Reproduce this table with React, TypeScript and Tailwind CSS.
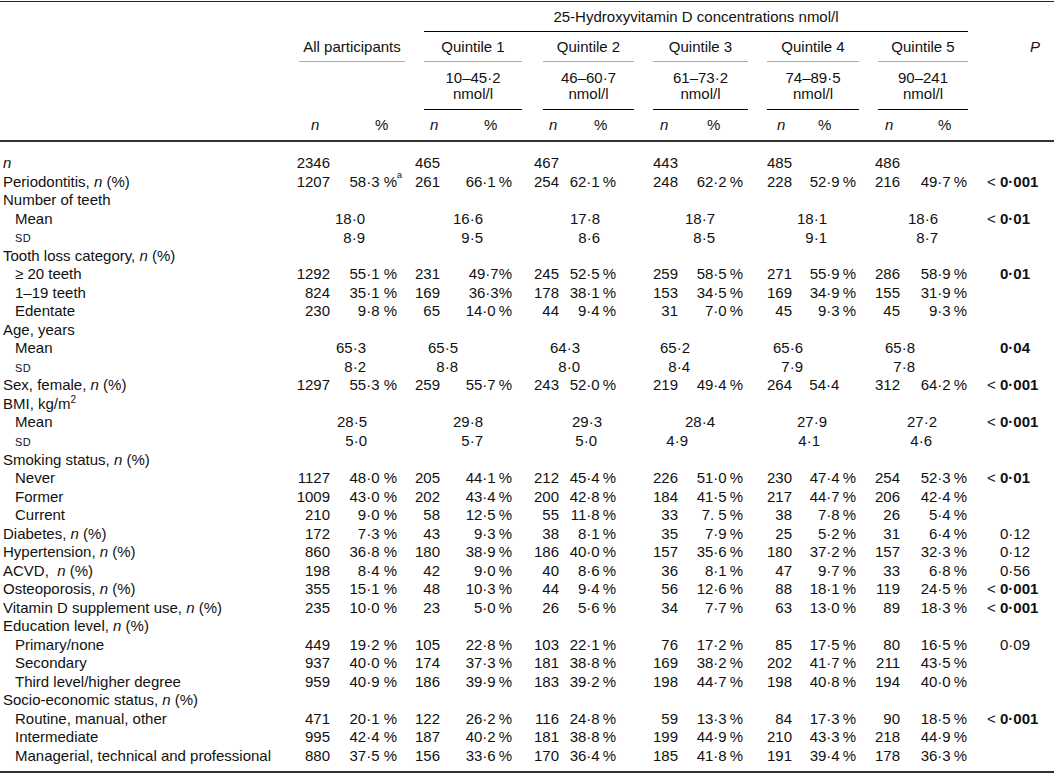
import React from "react";

type PV = { v: string; lt?: boolean; b?: boolean };
type Row =
  | { k: "h"; label: React.ReactNode }
  | { k: "v"; label: React.ReactNode; ind?: boolean; v: string[]; p?: PV }
  | { k: "s"; label: React.ReactNode; v: string[]; pr: string[]; p?: PV };

const SD = <span className="text-[11px] tracking-[0.5px]">SD</span>;

const rows: Row[] = [
  { k: "v", label: <i>n</i>, v: ["2346", "", "465", "", "467", "", "443", "", "485", "", "486", ""] },
  {
    k: "v",
    label: <>Periodontitis, <i>n</i> (%)</>,
    v: ["1207", "58·3 %^a", "261", "66·1 %", "254", "62·1 %", "248", "62·2 %", "228", "52·9 %", "216", "49·7 %"],
    p: { v: "0·001", lt: true, b: true },
  },
  { k: "h", label: "Number of teeth" },
  {
    k: "s",
    label: "Mean",
    v: ["18·0", "16·6", "17·8", "18·7", "18·1", "18·6"],
    pr: ["pr-[32px]", "pr-[29px]", "pr-[16px]", "pr-[28px]", "pr-[29px]", "pr-[29px]"],
    p: { v: "0·01", lt: true, b: true },
  },
  {
    k: "s",
    label: SD,
    v: ["8·9", "9·5", "8·6", "8·5", "9·1", "8·7"],
    pr: ["pr-[32px]", "pr-[29px]", "pr-[16px]", "pr-[28px]", "pr-[29px]", "pr-[29px]"],
  },
  { k: "h", label: <>Tooth loss category, <i>n</i> (%)</> },
  {
    k: "v",
    ind: true,
    label: "≥ 20 teeth",
    v: ["1292", "55·1 %", "231", "49·7%", "245", "52·5 %", "259", "58·5 %", "271", "55·9 %", "286", "58·9 %"],
    p: { v: "0·01", b: true },
  },
  {
    k: "v",
    ind: true,
    label: "1–19 teeth",
    v: ["824", "35·1 %", "169", "36·3%", "178", "38·1 %", "153", "34·5 %", "169", "34·9 %", "155", "31·9 %"],
  },
  {
    k: "v",
    ind: true,
    label: "Edentate",
    v: ["230", "9·8 %", "65", "14·0 %", "44", "9·4 %", "31", "7·0 %", "45", "9·3 %", "45", "9·3 %"],
  },
  { k: "h", label: "Age, years" },
  {
    k: "s",
    label: "Mean",
    v: ["65·3", "65·5", "64·3", "65·2", "65·6", "65·8"],
    pr: ["pr-[31px]", "pr-[54px]", "pr-[36px]", "pr-[53px]", "pr-[53px]", "pr-[52px]"],
    p: { v: "0·04", b: true },
  },
  {
    k: "s",
    label: SD,
    v: ["8·2", "8·8", "8·0", "8·4", "7·9", "7·8"],
    pr: ["pr-[31px]", "pr-[54px]", "pr-[36px]", "pr-[53px]", "pr-[53px]", "pr-[52px]"],
  },
  {
    k: "v",
    label: <>Sex, female, <i>n</i> (%)</>,
    v: ["1297", "55·3 %", "259", "55·7 %", "243", "52·0 %", "219", "49·4 %", "264", "54·4\u00a0\u00a0\u00a0\u00a0", "312", "64·2 %"],
    p: { v: "0·001", lt: true, b: true },
  },
  { k: "h", label: <>BMI, kg/m<sup className="text-[10px] -top-[6px]">2</sup></> },
  {
    k: "s",
    label: "Mean",
    v: ["28·5", "29·8", "29·3", "28·4", "27·9", "27·2"],
    pr: ["pr-[30px]", "pr-[29px]", "pr-[14px]", "pr-[28px]", "pr-[29px]", "pr-[30px]"],
    p: { v: "0·001", lt: true, b: true },
  },
  {
    k: "s",
    label: SD,
    v: ["5·0", "5·7", "5·0", "4·9", "4·1", "4·6"],
    pr: ["pr-[30px]", "pr-[29px]", "pr-[19px]", "pr-[55px]", "pr-[36px]", "pr-[35px]"],
  },
  { k: "h", label: <>Smoking status, <i>n</i> (%)</> },
  {
    k: "v",
    ind: true,
    label: "Never",
    v: ["1127", "48·0 %", "205", "44·1 %", "212", "45·4 %", "226", "51·0 %", "230", "47·4 %", "254", "52·3 %"],
    p: { v: "0·01", lt: true, b: true },
  },
  {
    k: "v",
    ind: true,
    label: "Former",
    v: ["1009", "43·0 %", "202", "43·4 %", "200", "42·8 %", "184", "41·5 %", "217", "44·7 %", "206", "42·4 %"],
  },
  {
    k: "v",
    ind: true,
    label: "Current",
    v: ["210", "9·0 %", "58", "12·5 %", "55", "11·8 %", "33", "7.\u00a05 %", "38", "7·8 %", "26", "5·4 %"],
  },
  {
    k: "v",
    label: <>Diabetes, <i>n</i> (%)</>,
    v: ["172", "7·3 %", "43", "9·3 %", "38", "8·1 %", "35", "7·9 %", "25", "5·2 %", "31", "6·4 %"],
    p: { v: "0·12" },
  },
  {
    k: "v",
    label: <>Hypertension, <i>n</i> (%)</>,
    v: ["860", "36·8 %", "180", "38·9 %", "186", "40·0 %", "157", "35·6 %", "180", "37·2 %", "157", "32·3 %"],
    p: { v: "0·12" },
  },
  {
    k: "v",
    label: <>ACVD, &nbsp;<i>n</i> (%)</>,
    v: ["198", "8·4 %", "42", "9·0 %", "40", "8·6 %", "36", "8·1 %", "47", "9·7 %", "33", "6·8 %"],
    p: { v: "0·56" },
  },
  {
    k: "v",
    label: <>Osteoporosis, <i>n</i> (%)</>,
    v: ["355", "15·1 %", "48", "10·3 %", "44", "9·4 %", "56", "12·6 %", "88", "18·1 %", "119", "24·5 %"],
    p: { v: "0·001", lt: true, b: true },
  },
  {
    k: "v",
    label: <>Vitamin D supplement use, <i>n</i> (%)</>,
    v: ["235", "10·0 %", "23", "5·0 %", "26", "5·6 %", "34", "7·7 %", "63", "13·0 %", "89", "18·3 %"],
    p: { v: "0·001", lt: true, b: true },
  },
  { k: "h", label: <>Education level, <i>n</i> (%)</> },
  {
    k: "v",
    ind: true,
    label: "Primary/none",
    v: ["449", "19·2 %", "105", "22·8 %", "103", "22·1 %", "76", "17·2 %", "85", "17·5 %", "80", "16·5 %"],
    p: { v: "0·09" },
  },
  {
    k: "v",
    ind: true,
    label: "Secondary",
    v: ["937", "40·0 %", "174", "37·3 %", "181", "38·8 %", "169", "38·2 %", "202", "41·7 %", "211", "43·5 %"],
  },
  {
    k: "v",
    ind: true,
    label: "Third level/higher degree",
    v: ["959", "40·9 %", "186", "39·9 %", "183", "39·2 %", "198", "44·7 %", "198", "40·8 %", "194", "40·0 %"],
  },
  { k: "h", label: <>Socio-economic status, <i>n</i> (%)</> },
  {
    k: "v",
    ind: true,
    label: "Routine, manual, other",
    v: ["471", "20·1 %", "122", "26·2 %", "116", "24·8 %", "59", "13·3 %", "84", "17·3 %", "90", "18·5 %"],
    p: { v: "0·001", lt: true, b: true },
  },
  {
    k: "v",
    ind: true,
    label: "Intermediate",
    v: ["995", "42·4 %", "187", "40·2 %", "181", "38·8 %", "199", "44·9 %", "210", "43·3 %", "218", "44·9 %"],
  },
  {
    k: "v",
    ind: true,
    label: "Managerial, technical and professional",
    v: ["880", "37·5 %", "156", "33·6 %", "170", "36·4 %", "185", "41·8 %", "191", "39·4 %", "178", "36·3 %"],
  },
];

const GRID =
  "grid grid-cols-[290px_40px_67px_43px_72px_47px_57px_62px_65px_49px_64px_44px_67px_33px_54px] h-[18.53px] items-center leading-[18px] whitespace-nowrap";

function pct(s: string, idx: number) {
  const sup = s.endsWith("^a");
  const base = sup ? s.slice(0, -2) : s;
  const txt = idx === 1 ? base.replace(" %", "\u00a0%") : base.replace(" %", "\u2009%");
  if (sup) {
    return (
      <span className="relative">
        {txt}
        <span className="absolute left-full -top-[2px] text-[9px] leading-none">a</span>
      </span>
    );
  }
  return txt;
}

function PCells({ p }: { p?: PV }) {
  return (
    <>
      <div className="text-right">{p && p.lt ? "<\u00a0" : ""}</div>
      <div className={p && p.b ? "font-bold" : ""}>{p ? p.v : ""}</div>
    </>
  );
}

function DataRow({ r }: { r: Row }) {
  if (r.k === "h") {
    return (
      <div className={GRID}>
        <div className="pl-[3px]">{r.label}</div>
      </div>
    );
  }
  if (r.k === "s") {
    return (
      <div className={GRID}>
        <div className="pl-[15px]">{r.label}</div>
        {r.v.map((v, i) => (
          <div key={i} className={"col-span-2 text-right " + r.pr[i]}>
            {v}
          </div>
        ))}
        <PCells p={r.p} />
      </div>
    );
  }
  return (
    <div className={GRID}>
      <div className={r.ind ? "pl-[15px]" : "pl-[3px]"}>{r.label}</div>
      {r.v.map((v, i) => (
        <div key={i} className="text-right">
          {i % 2 === 1 ? pct(v, i) : v}
        </div>
      ))}
      <PCells p={r.p} />
    </div>
  );
}

const groups = [
  { q: "Quintile 1", r1: "10–45·2", w: "w-[98px]", gap: "w-[19px]" },
  { q: "Quintile 2", r1: "46–60·7", w: "w-[91px]", gap: "w-[21px]" },
  { q: "Quintile 3", r1: "61–73·2", w: "w-[95px]", gap: "w-[19px]" },
  { q: "Quintile 4", r1: "74–89·5", w: "w-[92px]", gap: "w-[19px]" },
  { q: "Quintile 5", r1: "90–241", w: "w-[90px]", gap: "w-[19px]" },
];

export default function App() {
  return (
    <div className="w-[1054px] h-[782px] bg-white text-[#111] text-[15px] font-['Liberation_Sans',Arial,Helvetica,sans-serif] pt-[1px] overflow-hidden">
      <div className="border-t-[1.5px] border-[#222]">
        {/* header row 1 */}
        <div className="flex h-[30px]">
          <div className="w-[424px] shrink-0" />
          <div className="w-[544px] shrink-0 border-b border-black text-center leading-[29px]">
            25-Hydroxyvitamin D concentrations nmol/l
          </div>
        </div>
        {/* header row 2 */}
        <div className="flex h-[30px]">
          <div className="w-[299px] shrink-0" />
          <div className="w-[106px] shrink-0 border-b border-[#aaa] text-center leading-[29px]">All participants</div>
          {groups.map((g, i) => (
            <React.Fragment key={i}>
              <div className={g.gap + " shrink-0"} />
              <div className={g.w + " shrink-0 border-b border-[#aaa] text-center leading-[29px]"}>{g.q}</div>
            </React.Fragment>
          ))}
          <div className="flex-1 pl-[62px] leading-[29px] italic">P</div>
        </div>
        {/* header row 3 */}
        <div className="flex h-[48px]">
          <div className="w-[299px] shrink-0" />
          <div className="w-[106px] shrink-0" />
          {groups.map((g, i) => (
            <React.Fragment key={i}>
              <div className={g.gap + " shrink-0"} />
              <div className={g.w + " shrink-0 border-b border-black text-center leading-[16px] flex flex-col justify-center"}>
                <div>{g.r1}</div>
                <div>nmol/l</div>
              </div>
            </React.Fragment>
          ))}
        </div>
        {/* header row 4 */}
        <div className="flex h-[32px] border-b-2 border-[#333] items-center italic leading-[30px]">
          <div className="w-[311px] shrink-0" />
          <div className="w-[64px] shrink-0">n</div>
          <div className="w-[55px] shrink-0 not-italic">%</div>
          <div className="w-[54px] shrink-0">n</div>
          <div className="w-[65px] shrink-0 not-italic">%</div>
          <div className="w-[45px] shrink-0">n</div>
          <div className="w-[66px] shrink-0 not-italic">%</div>
          <div className="w-[47px] shrink-0">n</div>
          <div className="w-[70px] shrink-0 not-italic">%</div>
          <div className="w-[41px] shrink-0">n</div>
          <div className="w-[67px] shrink-0 not-italic">%</div>
          <div className="w-[53px] shrink-0">n</div>
          <div className="not-italic">%</div>
        </div>
        {/* body */}
        <div className="pt-[12px] pb-[6px] border-b-2 border-[#333]">
          {rows.map((r, i) => (
            <DataRow key={i} r={r} />
          ))}
        </div>
      </div>
    </div>
  );
}
